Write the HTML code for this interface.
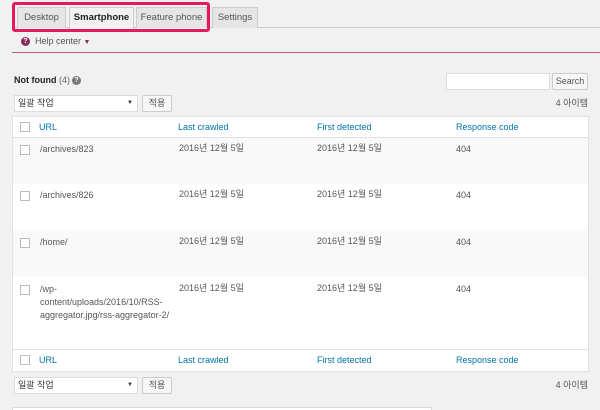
<!DOCTYPE html>
<html><head><meta charset="utf-8"><style>
*{box-sizing:border-box;margin:0;padding:0}
body{width:600px;height:410px;overflow:hidden;background:#f1f1f1;font-family:"Liberation Sans","Noto Sans CJK KR",sans-serif;font-size:9px;color:#555;position:relative}
.a{position:absolute;line-height:12px}
.tab{position:absolute;top:7px;height:21px;border:1px solid #ccc;border-bottom:none;background:#e5e5e5;color:#555;font-size:9.5px;line-height:20px;text-align:center;font-weight:normal}
.lnk{color:#0073aa}
.cb{position:absolute;width:10px;height:10px;border:1px solid #bbb;background:#fff}
.row{position:absolute;left:13px;width:575px}
.btn{position:absolute;border:1px solid #ccc;background:#f7f7f7;border-radius:2px;text-align:center;color:#555}
</style></head><body>
<div class="a" style="left:12px;top:27px;width:588px;height:1px;background:#ccc"></div>
<div class="tab" style="left:17px;width:49px">Desktop</div>
<div class="tab" style="left:69px;width:65px;background:#f1f1f1;color:#222;font-weight:bold;height:22px">Smartphone</div>
<div class="tab" style="left:136px;width:71px">Feature phone</div>
<div class="tab" style="left:212px;width:46px">Settings</div>
<div class="a" style="left:12px;top:2px;width:198px;height:30px;border:3px solid #e6195f;border-radius:3px"></div>
<div class="a" style="left:21px;top:37px;width:9px;height:9px;border-radius:50%;background:#8b2a5a;color:#fff;font-size:7px;line-height:9px;text-align:center;font-weight:bold">?</div>
<div class="a" style="left:35px;top:35px;color:#555">Help center <span style="color:#8b2a5a;font-size:7px">▼</span></div>
<div class="a" style="left:12px;top:52px;width:588px;height:1px;background:#b85c80"></div>
<div class="a" style="left:14px;top:74px;font-weight:bold;color:#222">Not found <span style="font-weight:normal;color:#666">(4)</span></div>
<div class="a" style="left:72px;top:76px;width:9px;height:9px;border-radius:50%;background:#777;color:#fff;font-size:7px;line-height:9px;text-align:center;font-weight:bold">?</div>
<div class="a" style="left:446px;top:73px;width:104px;height:17px;background:#fff;border:1px solid #ddd"></div>
<div class="btn" style="left:552px;top:73px;width:36px;height:17px;line-height:15px">Search</div>
<div class="a" style="left:14px;top:95px;width:124px;height:17px;background:#fff;border:1px solid #ddd;padding-left:3px;line-height:15px;color:#333">일괄 작업<span style="position:absolute;right:4px;font-size:6px">▼</span></div>
<div class="btn" style="left:142px;top:95px;width:30px;height:17px;line-height:15px">적용</div>
<div class="a" style="right:12px;top:97px;color:#555">4 아이템</div>
<div class="a" style="left:12px;top:116px;width:577px;height:256px;border:1px solid #e1e1e1;background:#fff"></div>
<div class="row" style="top:117px;height:21px;background:#fff;border-bottom:1px solid #e1e1e1"></div>
<div class="row" style="top:138px;height:46px;background:#f9f9f9"></div>
<div class="row" style="top:230px;height:47px;background:#f9f9f9"></div>
<div class="row" style="top:349px;height:22px;background:#fff;border-top:1px solid #e1e1e1"></div>
<div class="cb" style="left:20px;top:122px"></div>
<div class="a lnk" style="left:39px;top:121px">URL</div>
<div class="a lnk" style="left:178px;top:121px">Last crawled</div>
<div class="a lnk" style="left:317px;top:121px">First detected</div>
<div class="a lnk" style="left:456px;top:121px">Response code</div>
<div class="cb" style="left:20px;top:145px"></div><div class="a" style="left:40px;top:143px">/archives/823</div><div class="a" style="left:179px;top:142px">2016년 12월 5일</div><div class="a" style="left:317px;top:142px">2016년 12월 5일</div><div class="a" style="left:456px;top:143px">404</div>
<div class="cb" style="left:20px;top:191px"></div><div class="a" style="left:40px;top:189px">/archives/826</div><div class="a" style="left:179px;top:188px">2016년 12월 5일</div><div class="a" style="left:317px;top:188px">2016년 12월 5일</div><div class="a" style="left:456px;top:189px">404</div>
<div class="cb" style="left:20px;top:238px"></div><div class="a" style="left:40px;top:236px">/home/</div><div class="a" style="left:179px;top:235px">2016년 12월 5일</div><div class="a" style="left:317px;top:235px">2016년 12월 5일</div><div class="a" style="left:456px;top:236px">404</div>
<div class="cb" style="left:20px;top:285px"></div><div class="a" style="left:40px;top:283px;line-height:13px">/wp-<br>content/uploads/2016/10/RSS-<br>aggregator.jpg/rss-aggregator-2/</div><div class="a" style="left:179px;top:282px">2016년 12월 5일</div><div class="a" style="left:317px;top:282px">2016년 12월 5일</div><div class="a" style="left:456px;top:283px">404</div>
<div class="cb" style="left:20px;top:355px"></div>
<div class="a lnk" style="left:39px;top:354px">URL</div>
<div class="a lnk" style="left:178px;top:354px">Last crawled</div>
<div class="a lnk" style="left:317px;top:354px">First detected</div>
<div class="a lnk" style="left:456px;top:354px">Response code</div>
<div class="a" style="left:14px;top:377px;width:124px;height:17px;background:#fff;border:1px solid #ddd;padding-left:3px;line-height:15px;color:#333">일괄 작업<span style="position:absolute;right:4px;font-size:6px">▼</span></div>
<div class="btn" style="left:142px;top:377px;width:30px;height:17px;line-height:15px">적용</div>
<div class="a" style="right:12px;top:379px;color:#555">4 아이템</div>
<div class="a" style="left:12px;top:407px;width:420px;height:3px;border:1px solid #ddd;border-bottom:none;background:#fff"></div>
</body></html>
